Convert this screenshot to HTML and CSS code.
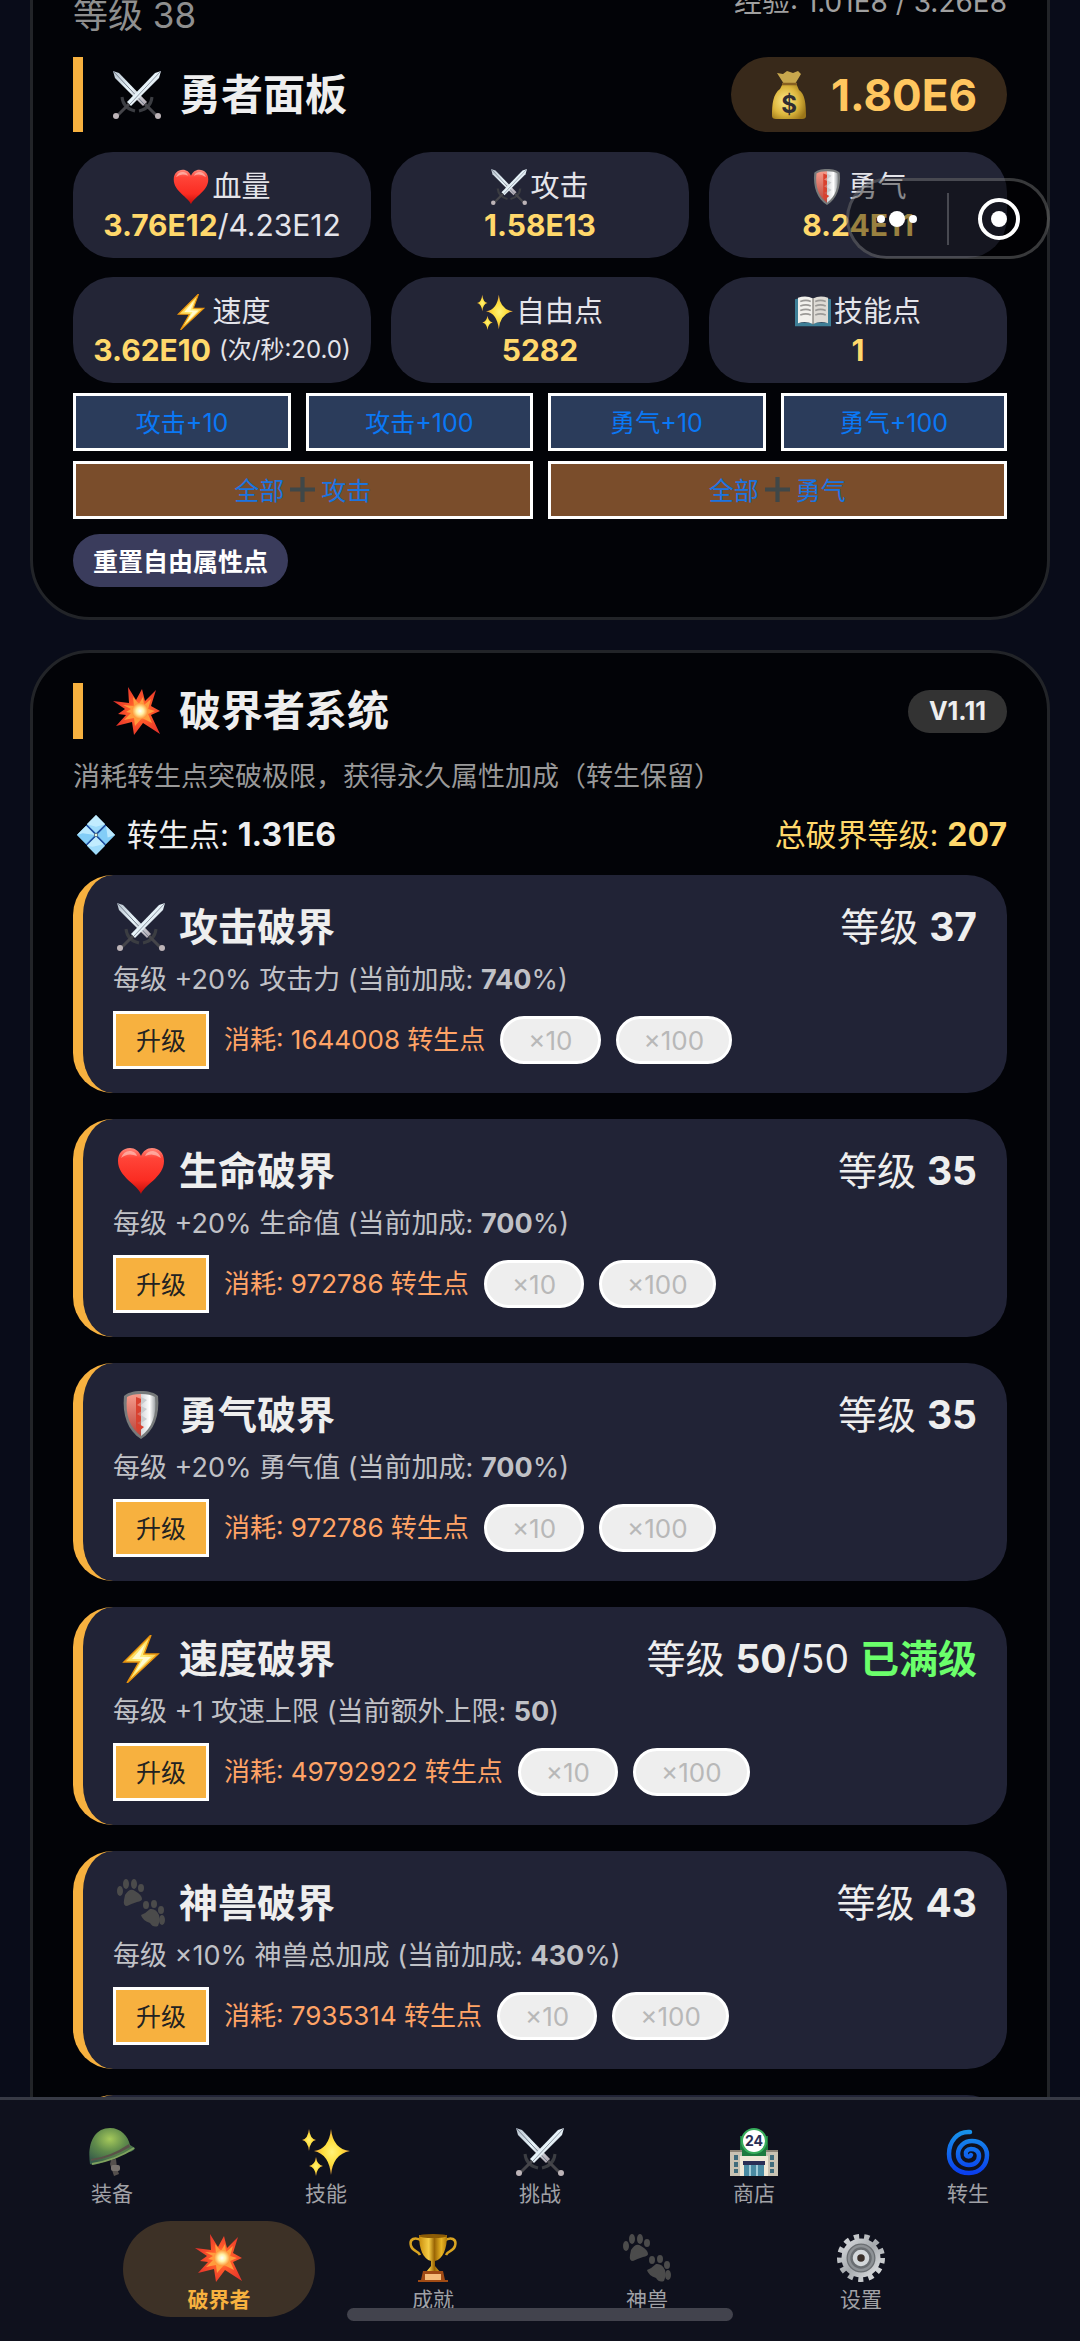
FILE: index.html
```html
<!DOCTYPE html>
<html lang="zh-CN">
<head>
  <meta charset="UTF-8">
  <meta name="viewport" content="width=device-width, initial-scale=1.0">
  <title>勇者面板</title>
  <link rel="stylesheet" href="styles.css">
</head>
<body>
  <!-- icon set -->
  <svg class="sprite" aria-hidden="true">
    <defs>
      <linearGradient id="gBlade" x1="0" y1="0" x2="1" y2="1">
        <stop offset="0" stop-color="#b9c4cf"/><stop offset=".5" stop-color="#e9f5fb"/><stop offset="1" stop-color="#a99fa8"/>
      </linearGradient>
      <linearGradient id="gHeart" x1="0" y1="0" x2="0" y2="1">
        <stop offset="0" stop-color="#ff8a7c"/><stop offset=".22" stop-color="#ff4438"/><stop offset=".7" stop-color="#fb2c22"/><stop offset="1" stop-color="#c00d0a"/>
      </linearGradient>
      <linearGradient id="gBolt" x1="0" y1="0" x2="1" y2="1">
        <stop offset="0" stop-color="#ffb01f"/><stop offset=".5" stop-color="#fff07a"/><stop offset="1" stop-color="#f09a10"/>
      </linearGradient>
      <radialGradient id="gStar">
        <stop offset="0" stop-color="#fff27a"/><stop offset=".5" stop-color="#ffdf3e"/><stop offset="1" stop-color="#f5a93a"/>
      </radialGradient>
      <radialGradient id="gBoomRed" cx=".57" cy=".5" r=".55">
        <stop offset="0" stop-color="#ffb35c"/><stop offset=".4" stop-color="#ff5a2a"/><stop offset="1" stop-color="#e8352b"/>
      </radialGradient>
      <radialGradient id="gBoomIn">
        <stop offset="0" stop-color="#ffffff"/><stop offset=".45" stop-color="#fff3a6"/><stop offset="1" stop-color="#ff9436"/>
      </radialGradient>
      <linearGradient id="gShieldL" x1="0" y1="0" x2="0" y2="1">
        <stop offset="0" stop-color="#f79c8c"/><stop offset="1" stop-color="#b8433a"/>
      </linearGradient>
      <linearGradient id="gShieldR" x1="0" y1="0" x2="1" y2="0">
        <stop offset="0" stop-color="#d5d7da"/><stop offset=".6" stop-color="#ffffff"/><stop offset="1" stop-color="#9ea2a6"/>
      </linearGradient>
      <linearGradient id="gGold" x1="0" y1="0" x2="1" y2="0">
        <stop offset="0" stop-color="#c98d0c"/><stop offset=".35" stop-color="#f6cd45"/><stop offset=".55" stop-color="#9a6504"/><stop offset=".8" stop-color="#e9b525"/><stop offset="1" stop-color="#b27a08"/>
      </linearGradient>
      <radialGradient id="gBag" cx=".4" cy=".5" r=".65">
        <stop offset="0" stop-color="#fdea8a"/><stop offset=".6" stop-color="#dcb53c"/><stop offset="1" stop-color="#9a7519"/>
      </radialGradient>
      <radialGradient id="gHelmet" cx=".45" cy=".3" r=".7">
        <stop offset="0" stop-color="#a5c95b"/><stop offset=".5" stop-color="#5f8a4b"/><stop offset="1" stop-color="#355b4a"/>
      </radialGradient>
      <linearGradient id="gSwirl" x1="0" y1="0" x2="0" y2="1">
        <stop offset="0" stop-color="#1792ea"/><stop offset="1" stop-color="#0a3fee"/>
      </linearGradient>
      <linearGradient id="gSteel" x1="0" y1="0" x2="1" y2="1">
        <stop offset="0" stop-color="#d7dadd"/><stop offset=".5" stop-color="#a5a9ad"/><stop offset="1" stop-color="#dfe1e3"/>
      </linearGradient>
    </defs>

    <symbol id="swords" viewBox="0 0 48 48">
      <path d="M0 0 L6 2 L34 31 L30 35 L2 7z" fill="url(#gBlade)"/>
      <path d="M0 0 L31 33" stroke="#757e8c" stroke-width="1"/>
      <path d="M48 0 L42 2 L14 31 L18 35 L46 7z" fill="url(#gBlade)"/>
      <path d="M48 0 L17 33" stroke="#8c94a0" stroke-width="1"/>
      <path d="M9 26 Q10 37 22 40 M39 26 Q38 37 26 40" fill="none" stroke="#3b3d42" stroke-width="3"/>
      <path d="M16 33 L4 45 M32 33 L44 45" stroke="#45454a" stroke-width="3"/>
      <circle cx="3" cy="45" r="3" fill="#bdb4b8"/><circle cx="45" cy="45" r="3" fill="#bdb4b8"/>
    </symbol>

    <symbol id="heart" viewBox="0 0 48 48">
      <path d="M24 47 C21 38 1 30 1 14 C1 6 6 1 13 1 C18 1 22 4 24 9 C26 4 30 1 35 1 C42 1 47 6 47 14 C47 30 27 38 24 47z" fill="url(#gHeart)"/>
      <path d="M4 11 Q7 3 14 4 Q19 5 20 9 Q11 5 4 11z M28 9 Q30 4 36 4 Q42 5 44 11 Q36 5 28 9z" fill="#ffc0b6" opacity=".7"/>
    </symbol>

    <symbol id="shield" viewBox="0 0 48 48">
      <path d="M24 0 C16 0 10 2 7 5 C5 24 11 40 24 48 C37 40 43 24 41 5 C38 2 32 0 24 0z" fill="#777a7b"/>
      <path d="M24 3 C18 3 13 4 10 6 C8 24 13 37 24 45z" fill="url(#gShieldL)"/>
      <path d="M24 3 C30 3 35 4 38 6 C40 24 35 37 24 45z" fill="url(#gShieldR)"/>
      <path d="M19 6 L27 9 L20 14 L28 18 L20 23 L28 28 L20 32 L27 36 L21 41 L19 37z" fill="#d9412f"/>
      <path d="M24 6 L30 9 L24 14z M24 15 L30 18 L24 23z M24 24 L30 28 L24 32z" fill="#c9ccce"/>
    </symbol>

    <symbol id="bolt" viewBox="0 0 48 48">
      <path d="M34 0 L7 27 L22 27 L10 48 L41 19 L27 19z" fill="url(#gBolt)" stroke="#e8920c" stroke-width="1.5"/>
      <path d="M28 9 L15 24 L26 24 L18 38 L34 22 L23 22z" fill="#fffbd0"/>
    </symbol>

    <symbol id="sparkles" viewBox="0 0 48 48">
      <path d="M29 1 Q31 21 48 23 Q31 26 29 47 Q27 26 12 23 Q27 21 29 1z" fill="url(#gStar)"/>
      <path d="M7 1 Q8 11 14 12 Q8 13 7 23 Q6 13 0 12 Q6 11 7 1z" fill="url(#gStar)"/>
      <path d="M14 29 Q15 37 21 38 Q15 39 14 48 Q13 39 7 38 Q13 37 14 29z" fill="url(#gStar)"/>
    </symbol>

    <symbol id="book" viewBox="0 0 48 48">
      <path d="M0 7 L4 6 V38 H44 V6 L48 7 V43 H0z" fill="#3e7f97"/>
      <path d="M4 5 Q15 1 24 6 V40 Q14 35 4 39z" fill="#f2f1ed"/>
      <path d="M44 5 Q33 1 24 6 V40 Q34 35 44 39z" fill="#dedbd5"/>
      <path d="M7 10 Q15 7 21 10 M7 16 Q15 13 21 16 M7 22 Q15 19 21 22 M7 28 Q15 25 21 28 M27 10 Q34 7 41 10 M27 16 Q34 13 41 16 M27 22 Q34 19 41 22 M27 28 Q34 25 41 28" fill="none" stroke="#9b9a97" stroke-width="2"/>
      <path d="M24 6 V41" stroke="#77726d" stroke-width="1.5"/>
    </symbol>

    <symbol id="boom" viewBox="0 0 48 48">
      <path d="M15 0 L23 13 L29 2 L32 14 L43 3 L38 19 L47 24 L38 28 L47 47 L30 36 L21 48 L19 35 L3 39 L13 28 L5 27 L12 22 L0 14 L16 16z" fill="url(#gBoomRed)"/>
      <path d="M20 10 L26 17 L30 10 L31 18 L38 12 L35 22 L42 24 L35 27 L39 36 L29 31 L22 39 L21 31 L11 33 L18 26 L13 25 L18 22 L10 18 L21 19z" fill="#ff9c3d"/>
      <circle cx="27" cy="24" r="8" fill="url(#gBoomIn)"/>
    </symbol>

    <symbol id="diamond" viewBox="0 0 48 48">
      <path d="M12 12 h24 v24 h-24z" fill="#1f4fa0"/>
      <path d="M24 0 L35 11 L24 22 L13 11z M24 26 L35 37 L24 48 L13 37z" fill="#9fdcfb"/>
      <path d="M12 13 L23 24 L12 35 L1 24z M36 13 L47 24 L36 35 L25 24z" fill="#82cdf7"/>
      <path d="M24 0 L35 11 L24 14 L13 11z M12 13 L23 24 L8 22 L1 24z M36 13 L47 24 L38 27z M24 26 L33 35 L20 38 L13 37z" fill="#c9f0ff" opacity=".8"/>
      <circle cx="24" cy="24" r="2" fill="#e9f4e0" stroke="#54707d"/>
    </symbol>

    <symbol id="paws" viewBox="0 0 48 48">
      <g fill="#4b4b4b">
        <ellipse cx="3" cy="12" rx="3" ry="5"/><ellipse cx="9" cy="5" rx="3" ry="5"/><ellipse cx="17" cy="5" rx="3" ry="5"/><ellipse cx="24" cy="9" rx="3" ry="4"/>
        <path d="M8 16 Q13 8 18 12 Q25 16 25 20 Q25 22 20 23 Q14 25 10 27 Q6 27 7 21z"/>
        <ellipse cx="29" cy="26" rx="3" ry="4"/><ellipse cx="37" cy="25" rx="3" ry="4"/><ellipse cx="44" cy="31" rx="3" ry="4"/><ellipse cx="45" cy="41" rx="3" ry="5"/>
        <path d="M24 36 Q29 34 33 30 Q39 29 42 36 Q43 43 41 47 Q36 49 33 44 Q25 41 24 36z"/>
      </g>
    </symbol>

    <symbol id="plus" viewBox="0 0 24 24">
      <path d="M10 0 H14 V10 H24 V14 H14 V24 H10 V14 H0 V10 H10z" fill="#3f4748"/>
    </symbol>

    <symbol id="helmet" viewBox="0 0 48 48">
      <path d="M23 32 L28 31 L29 40 L31 46 L26 48 L22 36z" fill="#55504d"/>
      <rect x="23" y="37" width="9" height="6" rx="2" fill="#77716c"/>
      <path d="M2 36 C-1 16 6 0 22 0 C33 0 40 8 42 17 L47 20 Q46 23 41 24 Q26 29 13 35 Q5 38 2 36z" fill="url(#gHelmet)"/>
      <path d="M3 31 Q22 29 41 16 L42 19 Q24 30 3 33z" fill="#5a5148"/>
      <path d="M4 36 Q28 32 46 20" fill="none" stroke="#7fa25e" stroke-width="2"/>
    </symbol>

    <symbol id="swirl" viewBox="0 0 48 48">
      <path d="M26 4 C13 3 5 14 5 26 C5 38 14 45 25 45 C36 45 43 37 43 27 C43 18 36 13 28 13 C20 13 14 19 14 26 C14 33 19 37 25 37 C31 37 35 33 35 28 C35 23 31 21 27 21 C23 21 21 24 22 27 C23 29 26 29 27 27" fill="none" stroke="url(#gSwirl)" stroke-width="4.5" stroke-linecap="round"/>
    </symbol>

    <symbol id="trophy" viewBox="0 0 48 48">
      <path d="M13 7 C6 2 0 5 2 12 C4 18 9 16 11 21 M35 7 C42 2 48 5 46 12 C44 18 39 16 37 21" fill="none" stroke="#d9a421" stroke-width="2.5"/>
      <path d="M10 1 H38 C38 15 34 25 26 27 V32 L31 38 H17 L22 32 V27 C14 25 10 15 10 1z" fill="url(#gGold)"/>
      <ellipse cx="24" cy="2" rx="14" ry="2" fill="#8c5c06"/>
      <path d="M14 37 H34 L36 46 H39 V48 H9 V46 H12z" fill="#a04a14"/>
      <path d="M16 40 H32 V46 H16z" fill="#f6bd7a"/>
    </symbol>

    <symbol id="gear" viewBox="0 0 48 48">
      <circle cx="24" cy="24" r="21" fill="none" stroke="url(#gSteel)" stroke-width="6" stroke-dasharray="5.1 5.05"/>
      <circle cx="24" cy="24" r="17" fill="#6a6e72" stroke="url(#gSteel)" stroke-width="5"/>
      <circle cx="24" cy="24" r="12" fill="none" stroke="#8d9195" stroke-width="2.5"/>
      <circle cx="24" cy="24" r="6" fill="#3a2f2a" stroke="#d3d7da" stroke-width="4.5"/>
    </symbol>
  </svg>

  <div class="app">
    <main class="content">
      <section class="panel hero">
        <div class="hero-level">
          <span class="level">等级 38</span>
          <span class="exp">经验: 1.01E8 / 3.26E8</span>
        </div>
        <div class="panel-head">
          <h2><svg class="icon"><use href="#swords"/></svg>勇者面板</h2>
          <div class="gold">
            <svg class="icon" viewBox="0 0 48 48">
              <path d="M12 2 L18 3 L22 0 L28 2 L33 0 L36 3 L30 13 H19z" fill="#c8a74d"/>
              <path d="M18 12 H31 L34 19 C40 23 41 33 41 45 Q41 48 37 48 H11 Q7 48 7 45 C7 33 8 23 15 18z" fill="url(#gBag)"/>
              <path d="M17 13 H32" stroke="#876021" stroke-width="2.5"/>
              <text x="24" y="42" text-anchor="middle" class="bag-sign">$</text>
            </svg>
            1.80E6
          </div>
        </div>
        <div class="stats">
          <div class="stat">
            <p><svg class="icon-s"><use href="#heart"/></svg>血量</p>
            <p class="value"><b>3.76E12</b>/4.23E12</p>
          </div>
          <div class="stat">
            <p><svg class="icon-s"><use href="#swords"/></svg>攻击</p>
            <p class="value"><b>1.58E13</b></p>
          </div>
          <div class="stat">
            <p><svg class="icon-s"><use href="#shield"/></svg>勇气</p>
            <p class="value"><b>8.24E11</b></p>
          </div>
          <div class="stat">
            <p><svg class="icon-s"><use href="#bolt"/></svg>速度</p>
            <p class="value"><b>3.62E10</b> <small>(次/秒:20.0)</small></p>
          </div>
          <div class="stat">
            <p><svg class="icon-s"><use href="#sparkles"/></svg>自由点</p>
            <p class="value"><b>5282</b></p>
          </div>
          <div class="stat">
            <p><svg class="icon-s"><use href="#book"/></svg>技能点</p>
            <p class="value"><b>1</b></p>
          </div>
        </div>
        <div class="add-row">
          <button class="add">攻击+10</button>
          <button class="add">攻击+100</button>
          <button class="add">勇气+10</button>
          <button class="add">勇气+100</button>
        </div>
        <div class="all-row">
          <button class="add all">全部<svg class="plus"><use href="#plus"/></svg>攻击</button>
          <button class="add all">全部<svg class="plus"><use href="#plus"/></svg>勇气</button>
        </div>
        <button class="reset">重置自由属性点</button>
      </section>

      <section class="panel breaker">
        <div class="panel-head">
          <h2><svg class="icon"><use href="#boom"/></svg>破界者系统</h2>
          <span class="version">V1.11</span>
        </div>
        <p class="intro">消耗转生点突破极限，获得永久属性加成（转生保留）</p>
        <div class="points">
          <span class="rebirth"><svg class="gem"><use href="#diamond"/></svg>转生点: <b>1.31E6</b></span>
          <span class="total">总破界等级: <b>207</b></span>
        </div>

        <article class="card">
          <div class="card-head">
            <h3><svg class="icon"><use href="#swords"/></svg>攻击破界</h3>
            <span>等级 <b>37</b></span>
          </div>
          <p class="effect">每级 +20% 攻击力 (当前加成: <b>740</b>%)</p>
          <div class="actions">
            <button class="upgrade">升级</button>
            <span class="cost">消耗: 1644008 转生点</span>
            <button class="multi" disabled>×10</button>
            <button class="multi" disabled>×100</button>
          </div>
        </article>

        <article class="card">
          <div class="card-head">
            <h3><svg class="icon"><use href="#heart"/></svg>生命破界</h3>
            <span>等级 <b>35</b></span>
          </div>
          <p class="effect">每级 +20% 生命值 (当前加成: <b>700</b>%)</p>
          <div class="actions">
            <button class="upgrade">升级</button>
            <span class="cost">消耗: 972786 转生点</span>
            <button class="multi" disabled>×10</button>
            <button class="multi" disabled>×100</button>
          </div>
        </article>

        <article class="card">
          <div class="card-head">
            <h3><svg class="icon"><use href="#shield"/></svg>勇气破界</h3>
            <span>等级 <b>35</b></span>
          </div>
          <p class="effect">每级 +20% 勇气值 (当前加成: <b>700</b>%)</p>
          <div class="actions">
            <button class="upgrade">升级</button>
            <span class="cost">消耗: 972786 转生点</span>
            <button class="multi" disabled>×10</button>
            <button class="multi" disabled>×100</button>
          </div>
        </article>

        <article class="card">
          <div class="card-head">
            <h3><svg class="icon"><use href="#bolt"/></svg>速度破界</h3>
            <span>等级 <b>50</b>/50 <b class="max">已满级</b></span>
          </div>
          <p class="effect">每级 +1 攻速上限 (当前额外上限: <b>50</b>)</p>
          <div class="actions">
            <button class="upgrade">升级</button>
            <span class="cost">消耗: 49792922 转生点</span>
            <button class="multi" disabled>×10</button>
            <button class="multi" disabled>×100</button>
          </div>
        </article>

        <article class="card">
          <div class="card-head">
            <h3><svg class="icon"><use href="#paws"/></svg>神兽破界</h3>
            <span>等级 <b>43</b></span>
          </div>
          <p class="effect">每级 ×10% 神兽总加成 (当前加成: <b>430</b>%)</p>
          <div class="actions">
            <button class="upgrade">升级</button>
            <span class="cost">消耗: 7935314 转生点</span>
            <button class="multi" disabled>×10</button>
            <button class="multi" disabled>×100</button>
          </div>
        </article>

        <article class="card"></article>
      </section>
    </main>

    <nav class="tabs">
      <div class="tab-row">
        <button class="tab"><svg class="icon"><use href="#helmet"/></svg>装备</button>
        <button class="tab"><svg class="icon"><use href="#sparkles"/></svg>技能</button>
        <button class="tab"><svg class="icon"><use href="#swords"/></svg>挑战</button>
        <button class="tab">
          <svg class="icon" viewBox="0 0 48 48">
            <path d="M10 8 H38 V28 H10z" fill="#1d7a3f"/>
            <path d="M0 23 H12 V48 H0z M36 23 H48 V48 H36z" fill="#c9c3b3"/>
            <path d="M10 28 H38 V48 H10z" fill="#efe8d6"/>
            <path d="M0 22 H12 V24 H0z M36 22 H48 V24 H36z" fill="#8d8577"/>
            <path d="M13 33 H35 V37 H13z" fill="#2a2f55"/>
            <path d="M14 37 H34 V48 H14z" fill="#4a8ba3"/>
            <path d="M20 37 V48 M27 37 V48" stroke="#bfe2ea" stroke-width="1.5"/>
            <path d="M4 27 h4 v5 h-4z M4 34 h4 v5 h-4z M4 41 h4 v4 h-4z M40 27 h4 v5 h-4z M40 34 h4 v5 h-4z M40 41 h4 v4 h-4z" fill="#3f6c7c"/>
            <circle cx="24" cy="13" r="13" fill="#37ad5c"/>
            <circle cx="24" cy="13" r="11" fill="#ffffff"/>
            <text x="24" y="18" text-anchor="middle" class="shop-sign">24</text>
          </svg>
          商店
        </button>
        <button class="tab"><svg class="icon"><use href="#swirl"/></svg>转生</button>
      </div>
      <div class="tab-row">
        <button class="tab active"><svg class="icon"><use href="#boom"/></svg>破界者</button>
        <button class="tab"><svg class="icon"><use href="#trophy"/></svg>成就</button>
        <button class="tab"><svg class="icon"><use href="#paws"/></svg>神兽</button>
        <button class="tab"><svg class="icon"><use href="#gear"/></svg>设置</button>
      </div>
      <div class="home-bar"></div>
    </nav>

    <!-- floating menu -->
    <div class="capsule">
      <button aria-label="更多">
        <svg width="44" height="44" viewBox="0 0 44 44"><g fill="#fff"><circle cx="6" cy="22" r="4"/><circle cx="22" cy="22" r="8"/><circle cx="38" cy="22" r="4"/></g></svg>
      </button>
      <i></i>
      <button aria-label="关闭">
        <svg width="44" height="44" viewBox="0 0 44 44"><circle cx="22" cy="22" r="19" fill="none" stroke="#fff" stroke-width="4"/><circle cx="22" cy="22" r="8" fill="#fff"/></svg>
      </button>
    </div>
  </div>
</body>
</html>
```

FILE: styles.css
```css
* {
  margin: 0;
  padding: 0;
  box-sizing: border-box;
}

body {
  background: #090c19;
  color: #eeeeee;
  font-family: Inter, "Noto Sans CJK SC", sans-serif;
}

button {
  font-family: inherit;
  cursor: pointer;
}

.sprite {
  position: absolute;
  width: 0;
  height: 0;
}

.app {
  position: relative;
  display: flex;
  flex-direction: column;
  height: 100vh;
  overflow: hidden;
}

.content {
  flex: 1;
  min-height: 0;
  overflow: hidden;
  padding: 0 30px;
}

.panel {
  background: #020307;
  border: 3px solid #222428;
  border-radius: 60px;
  padding: 30px 40px;
}

.hero {
  margin-top: -60px;
  margin-bottom: 30px;
}

.hero-level {
  display: flex;
  justify-content: space-between;
  align-items: flex-end;
  height: 64px;
  margin-bottom: 20px;
  color: #8f8f8f;
}

.level {
  font-size: 35px;
  line-height: 44px;
}

.exp {
  font-size: 28px;
  line-height: 38px;
  margin-bottom: 16px;
  color: #a0a0a0;
}

.panel-head {
  display: flex;
  justify-content: space-between;
  align-items: center;
}

.panel-head h2 {
  display: flex;
  align-items: center;
  align-self: stretch;
  gap: 18px;
  min-height: 56px;
  padding-left: 30px;
  border-left: 10px solid #f7b13f;
  font-size: 42px;
  line-height: 50px;
  font-weight: 700;
}

.icon {
  width: 48px;
  height: 48px;
  flex: none;
}

.bag-sign {
  font-size: 24px;
  font-weight: 700;
  fill: #2f2c33;
}

.shop-sign {
  font-size: 14px;
  font-weight: 700;
  fill: #2a2f55;
}

.gold {
  display: flex;
  align-items: center;
  gap: 18px;
  height: 75px;
  padding: 0 30px 0 34px;
  border-radius: 40px;
  background: #38291a;
  color: #ffc65f;
  font-size: 44px;
  font-weight: 700;
}

.stats {
  display: grid;
  grid-template-columns: repeat(3, 1fr);
  gap: 19px 20px;
  margin-top: 20px;
}

.stat {
  height: 106px;
  padding-top: 16px;
  border-radius: 40px;
  background: #232536;
  font-size: 29px;
  color: #e4e4ea;
}

.stat p {
  display: flex;
  justify-content: center;
  align-items: center;
  height: 38px;
  line-height: 38px;
}

.stat .value {
  font-size: 30px;
}

.stat b {
  color: #ffd86b;
}

.stat small {
  margin-left: 8px;
  font-size: 24px;
}

.icon-s {
  width: 36px;
  height: 36px;
  margin-right: 3px;
}

.add-row,
.all-row {
  display: grid;
  grid-template-columns: 27fr 28fr 27fr 28fr;
  gap: 15px;
  margin-top: 10px;
}

.all-row {
  grid-template-columns: 1fr 1fr;
}

.add {
  display: flex;
  justify-content: center;
  align-items: center;
  height: 58px;
  padding-bottom: 2px;
  border: 3px solid #ffffff;
  background: #2b3c5b;
  color: #0a78f5;
  font-size: 25px;
}

.add.all {
  background: #7a4d2b;
  color: #1b74e0;
}

.plus {
  width: 25px;
  height: 25px;
  margin: 0 6px;
}

.reset {
  display: block;
  height: 53px;
  margin-top: 15px;
  padding: 0 20px 2px;
  border: none;
  border-radius: 27px;
  background: #3a3c5c;
  color: #ffffff;
  font-size: 25px;
  font-weight: 700;
}

.version {
  padding: 0 21px;
  border-radius: 22px;
  background: #333333;
  font-size: 25px;
  line-height: 43px;
  font-weight: 700;
}

.intro {
  margin-top: 20px;
  font-size: 27px;
  line-height: 36px;
  color: #999999;
}

.points {
  display: flex;
  justify-content: space-between;
  margin: 20px 0;
  font-size: 31px;
  line-height: 40px;
}

.points b {
  font-size: 32px;
}

.rebirth {
  display: flex;
  align-items: center;
  white-space: pre;
}

.gem {
  width: 40px;
  height: 40px;
  margin: 0 11px 0 3px;
}

.total {
  color: #ffd86b;
}

.card {
  height: 218px;
  margin-bottom: 26px;
  padding: 25px 30px;
  border-left: 10px solid #f7b13f;
  border-radius: 40px;
  background: #212336;
}

.card-head {
  display: flex;
  justify-content: space-between;
  align-items: center;
  height: 54px;
  font-size: 39px;
  line-height: 54px;
}

.card-head h3 {
  display: flex;
  align-items: center;
  gap: 14px;
  padding-left: 4px;
  font-size: inherit;
}

.max {
  color: #6bff6b;
}

.effect {
  margin: 7px 0 12px;
  font-size: 27px;
  line-height: 38px;
  color: #c0c1c6;
}

.actions {
  display: flex;
  align-items: center;
  gap: 15px;
}

.upgrade {
  height: 58px;
  padding: 0 20px 2px;
  border: 3px solid #ffffff;
  background: #f7b13f;
  color: #222222;
  font-size: 25px;
}

.cost {
  font-size: 26px;
  line-height: 38px;
  color: #ffa366;
}

.multi {
  height: 48px;
  padding: 0 25px;
  border: 3px solid #ffffff;
  border-radius: 24px;
  background: #eeeeee;
  color: #b8b8b8;
  font-size: 26px;
}

.tabs {
  position: relative;
  display: flex;
  flex-direction: column;
  gap: 10px;
  padding: 15px 5px 24px;
  border-top: 3px solid #373a45;
  background: #0f111d;
}

.tab-row {
  display: flex;
  justify-content: center;
}

.tab {
  display: flex;
  flex-direction: column;
  align-items: center;
  gap: 4px;
  width: 18%;
  height: 96px;
  margin: 0 1%;
  padding-top: 13px;
  border: none;
  border-radius: 48px;
  background: none;
  color: #a0a1a6;
  font-size: 21px;
  line-height: 28px;
}

.tab.active {
  background: #3d3126;
  color: #f7b13f;
  font-weight: 700;
}

/* sits over the tab labels */
.home-bar {
  position: absolute;
  left: 50%;
  bottom: 20px;
  width: 386px;
  height: 13px;
  margin-left: -193px;
  border-radius: 7px;
  background: #42434d;
}

.capsule {
  position: absolute;
  top: 178px;
  right: 30px;
  display: flex;
  align-items: center;
  justify-content: space-between;
  width: 204px;
  height: 81px;
  padding: 0 26px;
  border: 3px solid rgba(255, 255, 255, 0.22);
  border-radius: 41px;
  background: rgba(0, 0, 0, 0.4);
}

.capsule button {
  width: 44px;
  height: 44px;
  border: none;
  background: none;
}

.capsule i {
  width: 2px;
  height: 52px;
  background: rgba(255, 255, 255, 0.22);
}
```
